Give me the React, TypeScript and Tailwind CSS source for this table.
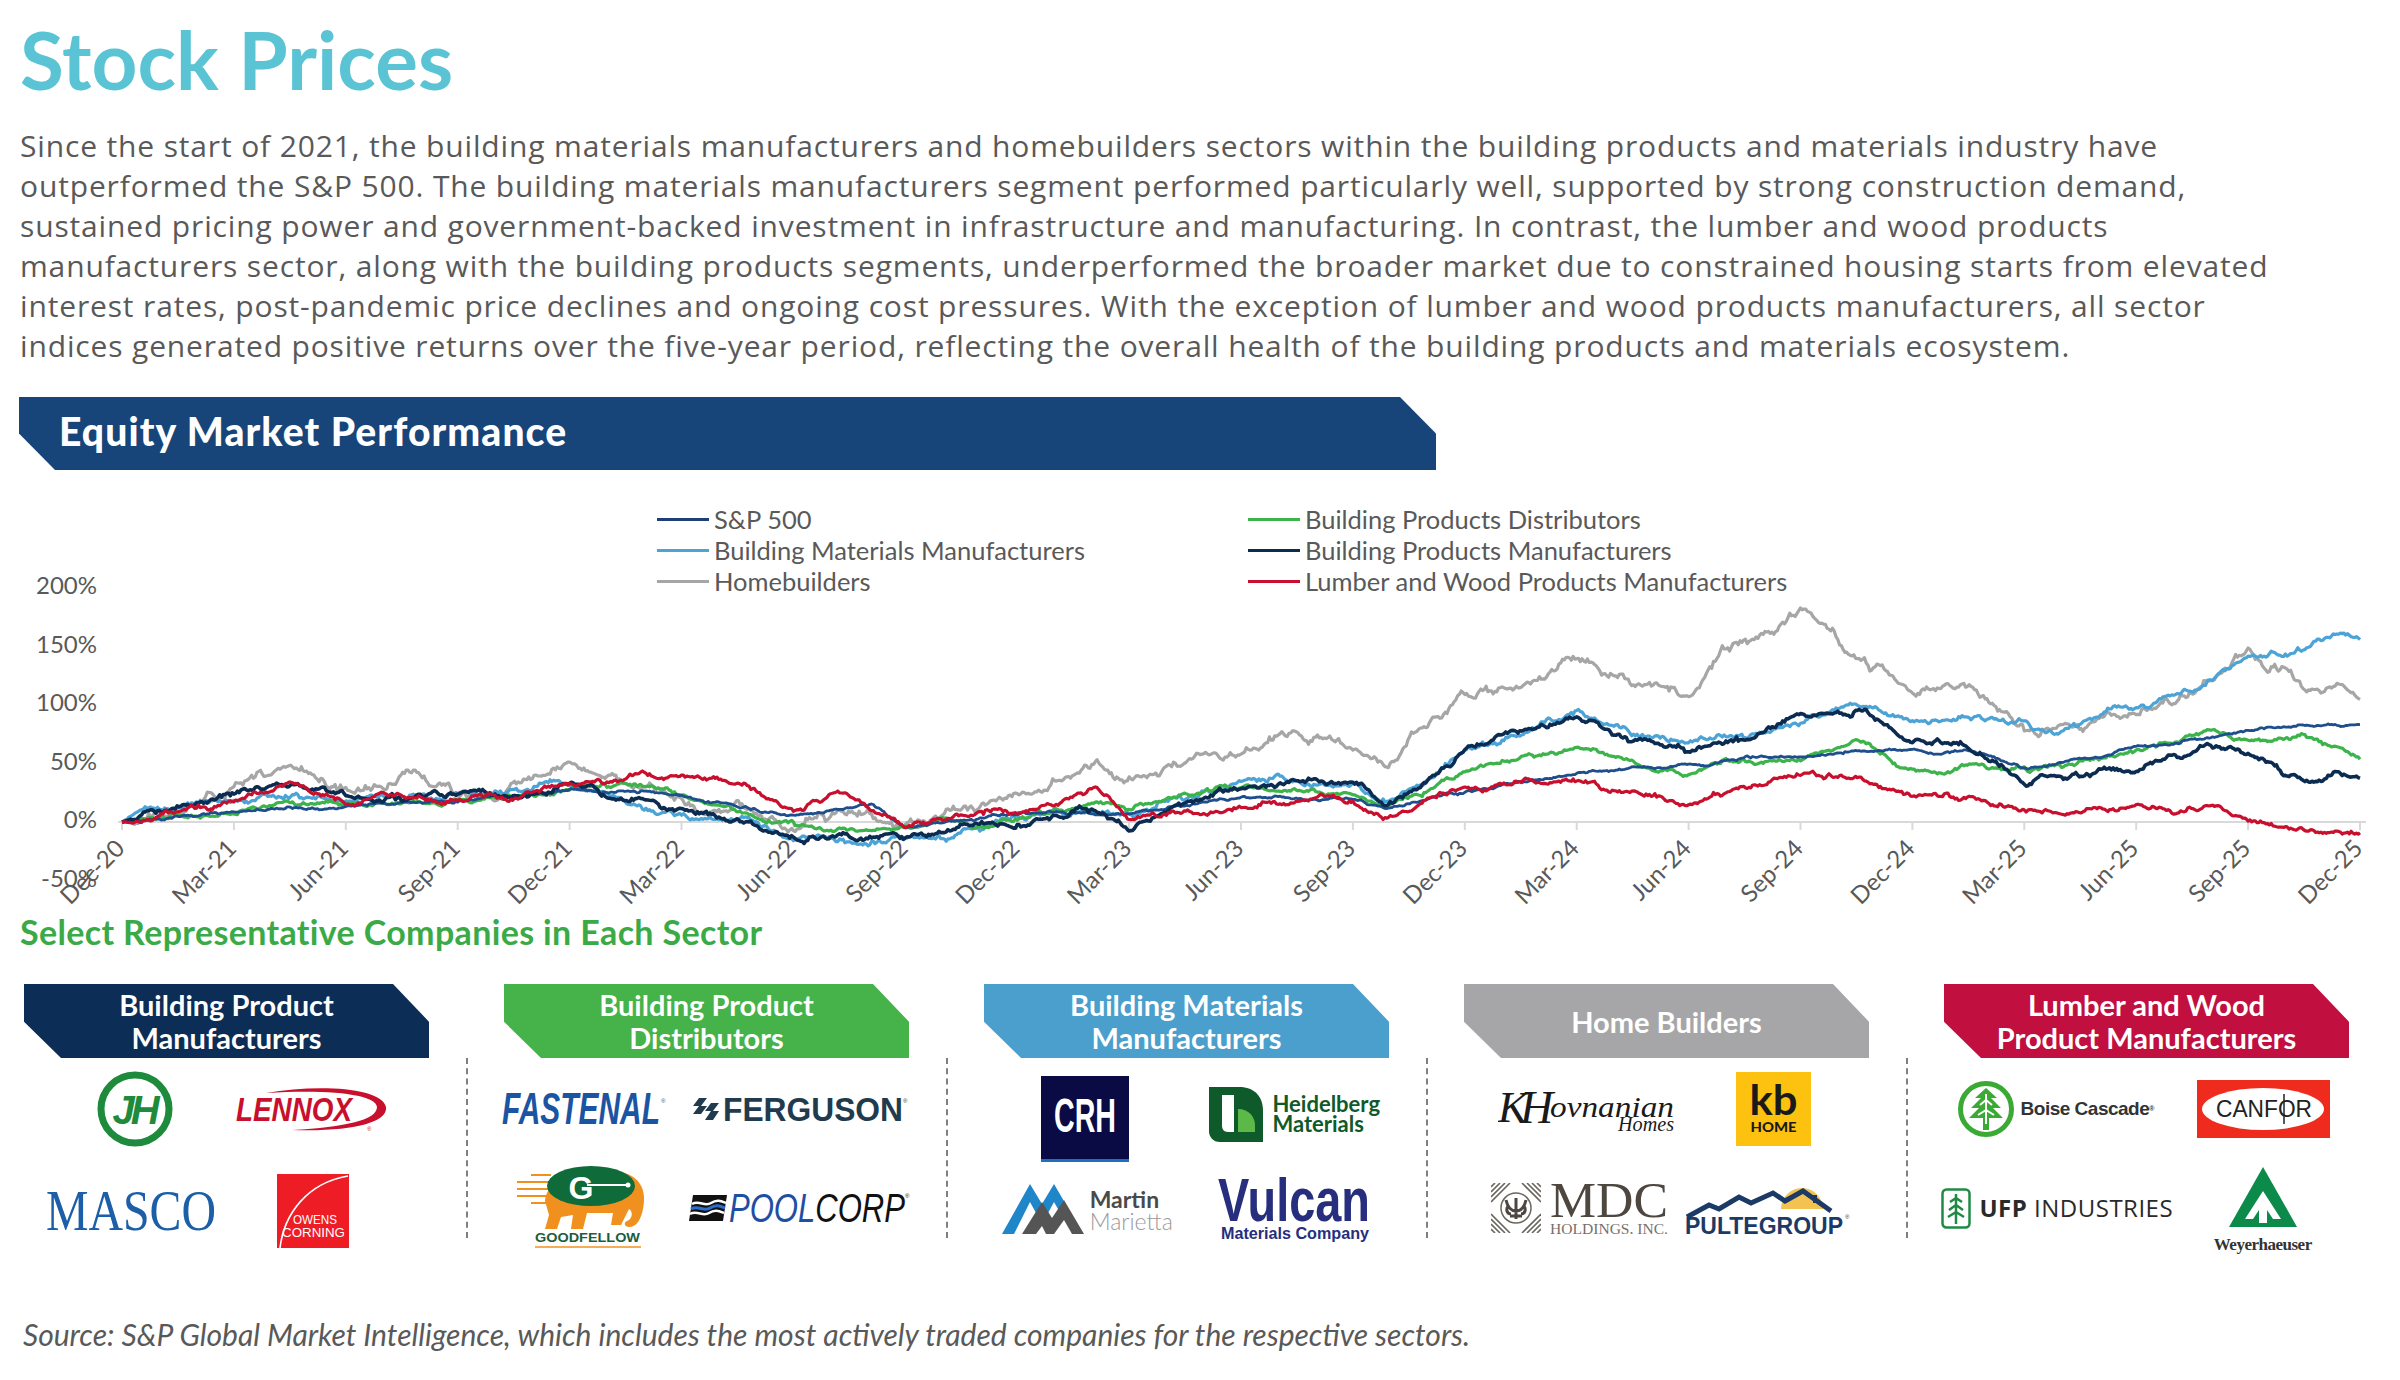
import React from 'react'

// ---------- chart data ----------
type Key = [number, number]

const X0 = 122
const Q = 111.9
const ZERO = 352
const K = 1.17

function mulberry32(a: number) {
  return function () {
    a |= 0
    a = (a + 0x6d2b79f5) | 0
    let t = Math.imul(a ^ (a >>> 15), 1 | a)
    t = (t + Math.imul(t ^ (t >>> 7), 61 | t)) ^ t
    return ((t ^ (t >>> 14)) >>> 0) / 4294967296
  }
}

function interp(keys: Key[], t: number) {
  for (let i = 1; i < keys.length; i++) {
    if (t <= keys[i][0]) {
      const [t0, v0] = keys[i - 1]
      const [t1, v1] = keys[i]
      return v0 + ((v1 - v0) * (t - t0)) / (t1 - t0)
    }
  }
  return keys[keys.length - 1][1]
}

function buildPath(keys: Key[], sigma: number, seed: number) {
  const rnd = mulberry32(seed)
  const gauss = () => {
    const u = rnd() || 1e-9
    const v = rnd()
    return Math.sqrt(-2 * Math.log(u)) * Math.cos(2 * Math.PI * v)
  }
  let n = 0
  const pts: string[] = []
  const N = 1260
  for (let i = 0; i <= N; i++) {
    const t = i / 63
    n = 0.92 * n + sigma * gauss()
    const damp = Math.min(1, i / 12)
    const v = interp(keys, t) + (n + (rnd() - 0.5) * sigma) * damp
    pts.push(`${(X0 + t * Q).toFixed(1)},${(ZERO - v * K).toFixed(1)}`)
  }
  return 'M' + pts.join('L')
}

const SERIES = [
  {
    color: '#a6a6a6', w: 3.2, sigma: 1.5, seed: 11,
    keys: [[0,0],[0.4,8],[1,32],[1.5,46],[2,26],[2.6,38],[3,25],[3.5,32],[4,47],[4.3,35],[5,19],[5.5,12],[6,-9],[6.4,5],[7,-4],[7.5,8],[8,22],[8.7,43],[9,37],[9.5,50],[10,62],[10.5,75],[11,64],[11.3,47],[11.5,70],[12,113],[12.5,118],[13,140],[13.5,118],[14,107],[14.3,150],[14.6,158],[15,179],[15.3,168],[15.6,140],[16,115],[16.5,115],[17,79],[17.5,80],[18,87],[18.5,110],[19,144],[19.5,115],[19.8,120],[20,100]] as Key[],
  },
  {
    color: '#4ba3d6', w: 3.2, sigma: 1.0, seed: 23,
    keys: [[0,0],[0.2,10],[1,18],[1.5,28],[2,20],[3,22],[3.5,25],[4,30],[4.5,20],[5,5],[5.6,0],[6,-15],[7,-15],[7.5,-8],[8,5],[9,10],[9.5,20],[10,30],[11,35],[11.3,18],[11.6,30],[12,58],[13,93],[13.5,78],[14,67],[14.5,72],[15,88],[15.5,100],[16,87],[16.5,85],[17,80],[17.3,72],[18,104],[18.5,112],[19,141],[19.5,146],[19.8,164],[20,158]] as Key[],
  },
  {
    color: '#3cb44b', w: 3.2, sigma: 0.8, seed: 37,
    keys: [[0,0],[1,9],[1.5,16],[2,15],[3,18],[4,30],[4.5,30],[5,25],[6,-4],[7,-4],[8,2],[8.7,18],[9,10],[10,28],[11,25],[11.3,15],[11.6,25],[12,44],[13,64],[13.5,52],[14,42],[14.5,55],[15,53],[15.5,70],[16,44],[17,44],[18,61],[18.7,77],[19,68],[19.5,70],[20,53]] as Key[],
  },
  {
    color: '#1f4e8c', w: 2.8, sigma: 0.45, seed: 41,
    keys: [[0,0],[1,8],[2,15],[3,18],[4,28],[5,22],[6,5],[6.7,13],[7,-4],[8,8],[9,9],[10,22],[11,19],[11.3,12],[12,27],[13,42],[14,50],[15,56],[15.5,60],[16,61],[16.5,62],[17,47],[18,64],[19,78],[20,84]] as Key[],
  },
  {
    color: '#0c2b50', w: 3.6, sigma: 1.0, seed: 53,
    keys: [[0,0],[1,20],[1.5,30],[2,20],[3,22],[3.5,24],[4,35],[4.5,22],[5,13],[6,-12],[7,-12],[7.5,-6],[8,-4],[8.7,10],[9,0],[10,33],[11,36],[11.3,13],[11.6,28],[12,64],[13,90],[13.5,70],[14,59],[14.5,70],[15,90],[15.5,93],[16,70],[16.5,60],[17,36],[18,47],[18.7,67],[19,60],[19.6,27],[19.8,40],[20,37]] as Key[],
  },
  {
    color: '#c8102e', w: 3.2, sigma: 0.9, seed: 67,
    keys: [[0,0],[0.5,5],[1,22],[1.5,40],[2,16],[3,23],[3.5,22],[4,33],[4.5,38],[5,39],[5.5,35],[6,10],[6.4,27],[7,0],[7.5,5],[8,13],[8.7,27],[9,2],[9.5,8],[10,15],[11,16],[11.3,3],[11.6,12],[12,30],[13,38],[13.5,25],[14,15],[14.5,28],[15,42],[15.5,42],[16,25],[16.5,22],[17,8],[18,10],[18.7,14],[19,2],[19.6,-9],[20,-3]] as Key[],
  },
].map(s => ({ ...s, d: buildPath(s.keys, s.sigma, s.seed) }))

const QUARTERS = ['Dec-20','Mar-21','Jun-21','Sep-21','Dec-21','Mar-22','Jun-22','Sep-22','Dec-22','Mar-23','Jun-23','Sep-23','Dec-23','Mar-24','Jun-24','Sep-24','Dec-24','Mar-25','Jun-25','Sep-25','Dec-25']

const LEGEND = [
  [
    { label: 'S&P 500', color: 'bg-[#1c3f78]' },
    { label: 'Building Materials Manufacturers', color: 'bg-[#4ba3d6]' },
    { label: 'Homebuilders', color: 'bg-[#a6a6a6]' },
  ],
  [
    { label: 'Building Products Distributors', color: 'bg-[#3cb44b]' },
    { label: 'Building Products Manufacturers', color: 'bg-[#0c2b50]' },
    { label: 'Lumber and Wood Products Manufacturers', color: 'bg-[#c8102e]' },
  ],
]

const PARAGRAPH = [
  'Since the start of 2021, the building materials manufacturers and homebuilders sectors within the building products and materials industry have',
  'outperformed the S&P 500. The building materials manufacturers segment performed particularly well, supported by strong construction demand,',
  'sustained pricing power and government-backed investment in infrastructure and manufacturing. In contrast, the lumber and wood products',
  'manufacturers sector, along with the building products segments, underperformed the broader market due to constrained housing starts from elevated',
  'interest rates, post-pandemic price declines and ongoing cost pressures. With the exception of lumber and wood products manufacturers, all sector',
  'indices generated positive returns over the five-year period, reflecting the overall health of the building products and materials ecosystem.',
]

function PerformanceChart() {
  const yTicks = [200, 150, 100, 50, 0, -50]
  return (
    <div className="relative h-[445px]">
      <svg width="2400" height="445" viewBox="0 0 2400 445" className="block">
        {yTicks.map(v => (
          <text key={v} x="97" y={ZERO - v * K} textAnchor="end" dominantBaseline="middle" fontFamily="Lato, sans-serif" fontSize="24" fill="#595959">
            {v}%
          </text>
        ))}
        <line x1="118" y1={ZERO} x2="2366" y2={ZERO} stroke="#d9d9d9" strokeWidth="2" />
        {QUARTERS.map((q, i) => (
          <line key={q} x1={X0 + i * Q} y1={ZERO} x2={X0 + i * Q} y2={ZERO + 8} stroke="#d9d9d9" strokeWidth="2" />
        ))}
        {SERIES.map((s, i) => (
          <path key={i} d={s.d} fill="none" stroke={s.color} strokeWidth={s.w} strokeLinejoin="round" />
        ))}
        {QUARTERS.map((q, i) => {
          const x = X0 + i * Q + 4
          return (
            <text key={q} x={x} y="380" transform={`rotate(-45 ${x} 380)`} textAnchor="end" fontFamily="Lato, sans-serif" fontSize="24" fill="#595959">
              {q}
            </text>
          )
        })}
      </svg>

      {/* legend sits over the empty top of the plot */}
      <div className="absolute left-[657px] top-[34px] flex font-['Lato',sans-serif] text-[25.5px] leading-[31px] text-[#595959]">
        {LEGEND.map((col, ci) => (
          <div key={ci} className={ci === 0 ? 'w-[591px]' : ''}>
            {col.map(item => (
              <div key={item.label} className="flex items-center gap-[5px] whitespace-nowrap">
                <span className={`w-[52px] h-[3px] ${item.color}`} />
                <span>{item.label}</span>
              </div>
            ))}
          </div>
        ))}
      </div>
    </div>
  )
}

// ---------- logos ----------
const SANS = 'Liberation Sans, Arial, sans-serif'
const SERIF = 'Liberation Serif, Times New Roman, serif'

function JamesHardie() {
  return (
    <svg width="78" height="78" viewBox="0 0 78 78">
      <circle cx="39" cy="39" r="34" fill="none" stroke="#1d8a3c" strokeWidth="7" />
      <text x="38" y="54" textAnchor="middle" fontFamily={SANS} fontWeight="900" fontStyle="italic" fontSize="40" fill="#1d8a3c" letterSpacing="-4">JH</text>
    </svg>
  )
}

function Lennox() {
  return (
    <svg width="152" height="48" viewBox="0 0 152 48">
      <path d="M30 8 C 80 -1, 146 2, 150 22 C 152 37, 118 47, 56 45 C 110 42, 141 35, 141 22 C 140 10, 98 4, 30 8 Z" fill="#c8102e" />
      <text x="0" y="36" fontFamily={SANS} fontWeight="700" fontStyle="italic" fontSize="34" fill="#c8102e" textLength="116" lengthAdjust="spacingAndGlyphs">LENNOX</text>
      <text x="131" y="46" fontFamily={SANS} fontSize="6" fill="#c8102e">®</text>
    </svg>
  )
}

function Masco() {
  return (
    <svg width="172" height="44" viewBox="0 0 172 44">
      <text x="0" y="41" fontFamily={SERIF} fontSize="57" fill="#1c5fa8" textLength="170" lengthAdjust="spacingAndGlyphs">MASCO</text>
    </svg>
  )
}

function OwensCorning() {
  return (
    <svg width="72" height="74" viewBox="0 0 72 74">
      <rect width="72" height="74" fill="#ee1c25" />
      <path d="M3 74 C 7 40, 30 9, 71 2" fill="none" stroke="#fff" strokeWidth="1.6" />
      <text x="16" y="50" fontFamily={SANS} fontSize="13" fill="#fff" textLength="44" lengthAdjust="spacingAndGlyphs">OWENS</text>
      <text x="5" y="63" fontFamily={SANS} fontSize="13" fill="#fff" textLength="63" lengthAdjust="spacingAndGlyphs">CORNING</text>
    </svg>
  )
}

function Fastenal() {
  return (
    <svg width="166" height="36" viewBox="0 0 166 36">
      <text x="0" y="33" fontFamily={SANS} fontWeight="900" fontStyle="italic" fontSize="44" fill="#1a54a3" textLength="158" lengthAdjust="spacingAndGlyphs">FASTENAL</text>
      <text x="159" y="12" fontFamily={SANS} fontSize="6" fill="#1a54a3">®</text>
    </svg>
  )
}

function Ferguson() {
  return (
    <svg width="216" height="28" viewBox="0 0 216 28">
      <path d="M6 3 H14 L8 11 L14 11 L8 19 H0 L6 11 H0 Z" fill="#1f3b4d" />
      <path d="M18 8 H26 L20 16 L26 16 L20 25 H12 L18 16 H12 Z" fill="#1f3b4d" />
      <text x="30" y="26" fontFamily={SANS} fontWeight="900" fontSize="33" fill="#1f3b4d" textLength="180" lengthAdjust="spacingAndGlyphs">FERGUSON</text>
      <text x="210" y="8" fontFamily={SANS} fontSize="6" fill="#1f3b4d">®</text>
    </svg>
  )
}

function Goodfellow() {
  return (
    <svg width="132" height="86" viewBox="0 0 132 86">
      {[10, 17, 24, 31, 38].map(y => (
        <line key={y} x1={y === 10 || y === 38 ? 14 : 0} y1={y} x2="34" y2={y} stroke="#f0901e" strokeWidth="2" />
      ))}
      <path d="M28 36 C 30 10, 70 2, 100 6 C 124 10, 130 26, 126 44 C 124 54, 120 62, 112 62 C 108 62, 106 58, 110 56 C 116 54, 116 46, 112 44 L 104 60 L 94 60 L 96 48 L 70 48 L 66 64 L 54 64 L 56 50 L 44 52 L 40 64 L 28 64 L 32 50 Z" fill="#f0901e" />
      <ellipse cx="74" cy="21" rx="44" ry="20" fill="#0f6b3a" />
      <text x="64" y="34" textAnchor="middle" fontFamily={SANS} fontWeight="900" fontSize="32" fill="#fff">G</text>
      <line x1="70" y1="20" x2="110" y2="20" stroke="#fff" strokeWidth="2" />
      <circle cx="111" cy="20" r="2.5" fill="#fff" />
      <text x="18" y="77" fontFamily={SANS} fontWeight="900" fontSize="13" fill="#1b5e3b" textLength="105" lengthAdjust="spacingAndGlyphs">GOODFELLOW</text>
      <line x1="18" y1="82" x2="124" y2="82" stroke="#f0901e" strokeWidth="1.5" />
    </svg>
  )
}

function PoolCorp() {
  return (
    <svg width="222" height="34" viewBox="0 0 222 34">
      <path d="M4 4 H38 L34 30 H0 Z" fill="#111" />
      <path d="M3 13 C 10 9, 16 16, 22 12 S 32 10, 37 12" fill="none" stroke="#fff" strokeWidth="2.5" />
      <path d="M2 18 C 9 14, 15 21, 21 17 S 31 15, 36 17" fill="none" stroke="#2a6fd0" strokeWidth="3" />
      <path d="M1 23 C 8 19, 14 26, 20 22 S 30 20, 35 22" fill="none" stroke="#fff" strokeWidth="2.5" />
      <text x="40" y="31" fontFamily={SANS} fontStyle="italic" fontSize="40" textLength="176" lengthAdjust="spacingAndGlyphs">
        <tspan fill="#1f4ea3">POOL</tspan>
        <tspan fill="#111">CORP</tspan>
      </text>
      <text x="216" y="7" fontFamily={SANS} fontSize="6" fill="#111">®</text>
    </svg>
  )
}

function Crh() {
  return (
    <svg width="88" height="86" viewBox="0 0 88 86">
      <rect width="88" height="83" fill="#0a0a45" />
      <rect y="83" width="88" height="3" fill="#1e6fbf" />
      <text x="44" y="56" textAnchor="middle" fontFamily={SANS} fontWeight="900" fontSize="48" fill="#fff" textLength="62" lengthAdjust="spacingAndGlyphs">CRH</text>
    </svg>
  )
}

function Heidelberg() {
  return (
    <div className="flex items-center gap-[9px]">
      <svg width="54" height="55" viewBox="0 0 54 55">
        <path d="M0 0 H30 C 46 0, 54 10, 54 24 V55 H11 C 4 55, 0 50, 0 44 Z" fill="#0f5a2a" />
        <path d="M13 8 H25 V45 H19 C 15 45, 13 42, 13 39 Z" fill="#fff" />
        <path d="M29 45 V22 C 40 22, 46 30, 46 38 V45 Z" fill="#5cb947" />
      </svg>
      <div className="font-['Lato',sans-serif] font-bold text-[22px] leading-[20px] text-[#0f5a2a] whitespace-nowrap">
        <div>Heidelberg</div>
        <div>Materials</div>
      </div>
    </div>
  )
}

function MartinMarietta() {
  return (
    <div className="flex items-end gap-[6px]">
      <svg width="82" height="52" viewBox="0 0 82 52">
        <polygon points="0,52 28,2 40,22 52,2 66,26 60,34 52,20 40,42 28,20 12,52" fill="#1f86c9" />
        <polygon points="20,52 40,20 50,36 62,18 82,52 70,52 62,38 52,52 44,52 40,44 34,52" fill="#555" />
      </svg>
      <div className="font-['Lato',sans-serif] text-[23px] leading-[22px] mb-[2px] whitespace-nowrap">
        <div className="font-bold text-[#4a4a4a]">Martin</div>
        <div className="font-light text-[#9a9a9a]">Marietta</div>
      </div>
    </div>
  )
}

function Vulcan() {
  return (
    <svg width="154" height="68" viewBox="0 0 154 68">
      <text x="0" y="47" fontFamily={SANS} fontWeight="900" fontSize="62" fill="#262e7d" textLength="152" lengthAdjust="spacingAndGlyphs">Vulcan</text>
      <text x="3" y="65" fontFamily={SANS} fontWeight="700" fontSize="16" fill="#262e7d" textLength="148" lengthAdjust="spacingAndGlyphs">Materials Company</text>
    </svg>
  )
}

function Hovnanian() {
  return (
    <svg width="182" height="48" viewBox="0 0 182 48">
      <text x="0" y="37" fontFamily={SERIF} fontStyle="italic" fontSize="44" fill="#1a1a1a">K</text>
      <text x="22" y="38" fontFamily={SERIF} fontStyle="italic" fontSize="46" fill="#1a1a1a">H</text>
      <text x="52" y="32" fontFamily={SERIF} fontStyle="italic" fontSize="30" fill="#1a1a1a" textLength="124" lengthAdjust="spacingAndGlyphs">ovnanian</text>
      <text x="120" y="46" fontFamily={SERIF} fontStyle="italic" fontSize="20" fill="#1a1a1a" textLength="56" lengthAdjust="spacingAndGlyphs">Homes</text>
    </svg>
  )
}

function KbHome() {
  return (
    <svg width="75" height="74" viewBox="0 0 75 74">
      <rect width="75" height="74" fill="#fdc20f" />
      <text x="37.5" y="43" textAnchor="middle" fontFamily="Lato, sans-serif" fontWeight="700" fontSize="42" fill="#1a1a1a" textLength="48" lengthAdjust="spacingAndGlyphs">kb</text>
      <text x="37.5" y="60" textAnchor="middle" fontFamily="Lato, sans-serif" fontWeight="900" fontSize="14" fill="#1a1a1a" textLength="46" lengthAdjust="spacingAndGlyphs">HOME</text>
    </svg>
  )
}

function Mdc() {
  return (
    <div className="flex items-center gap-[9px]">
      <svg width="50" height="50" viewBox="0 0 50 50">
        <g stroke="#6b655f" strokeWidth="1.6">
          {[4, 9, 14, 19].map(o => (
            <g key={o}>
              <line x1={o} y1="0" x2="0" y2={o} />
              <line x1={50 - o} y1="0" x2="50" y2={o} />
              <line x1="0" y1={50 - o} x2={o} y2="50" />
              <line x1="50" y1={50 - o} x2={50 - o} y2="50" />
            </g>
          ))}
        </g>
        <circle cx="25" cy="25" r="15" fill="#fff" stroke="#6b655f" strokeWidth="1.5" />
        <path d="M15 17 C 17 26, 21 28, 25 28 C 29 28, 33 26, 35 17 M25 15 V36 M19 33 H31 M18 22 C 14 26, 16 31, 20 31 M32 22 C 36 26, 34 31, 30 31" fill="none" stroke="#4e4740" strokeWidth="3" />
      </svg>
      <svg width="120" height="52" viewBox="0 0 120 52">
        <text x="0" y="35" fontFamily={SERIF} fontSize="50" fill="#4e4740" textLength="118" lengthAdjust="spacingAndGlyphs">MDC</text>
        <text x="0" y="52" fontFamily={SERIF} fontSize="14" fill="#77706a" textLength="118" lengthAdjust="spacingAndGlyphs">HOLDINGS, INC.</text>
      </svg>
    </div>
  )
}

function Pulte() {
  return (
    <svg width="166" height="54" viewBox="0 0 166 54">
      <path d="M96 28 A 21 21 0 0 1 138 28 Z" fill="#f3c251" />
      <polyline points="2,36 24,24 34,28 54,16 66,22 88,12 100,20 118,10 146,30" fill="none" stroke="#1c3a66" strokeWidth="5" strokeLinejoin="miter" />
      <rect x="128" y="14" width="4" height="8" fill="#1c3a66" />
      <text x="0" y="53" fontFamily={SANS} fontWeight="900" fontSize="23" fill="#1c3a66" textLength="158" lengthAdjust="spacingAndGlyphs">PULTEGROUP</text>
      <text x="160" y="38" fontFamily={SANS} fontSize="6" fill="#1c3a66">®</text>
    </svg>
  )
}

function BoiseCascade() {
  return (
    <div className="flex items-center gap-[6px]">
      <svg width="58" height="58" viewBox="0 0 58 58">
        <circle cx="29" cy="29" r="25.5" fill="none" stroke="#3aaa35" strokeWidth="5" />
        <path d="M29 8 L40 18 H34 L44 28 H36 L46 38 H32 V50 H26 V38 H12 L22 28 H14 L24 18 H18 Z" fill="#3aaa35" />
        <path d="M29 14 V44 M29 20 L23 25 M29 20 L35 25 M29 30 L21 35 M29 30 L37 35" stroke="#fff" strokeWidth="2" fill="none" />
      </svg>
      <span className="font-['Liberation_Sans',sans-serif] font-bold text-[19px] tracking-[-0.5px] text-[#333] whitespace-nowrap">
        Boise Cascade<sup className="text-[7px]">®</sup>
      </span>
    </div>
  )
}

function Canfor() {
  return (
    <svg width="133" height="58" viewBox="0 0 133 58">
      <rect width="133" height="58" fill="#ef2b1e" />
      <ellipse cx="66" cy="29" rx="61" ry="21" fill="#fff" />
      <text x="19" y="37" fontFamily={SANS} fontWeight="400" fontSize="24" fill="#222" textLength="96" lengthAdjust="spacingAndGlyphs">CANFOR</text>
      <line x1="87" y1="14" x2="87" y2="44" stroke="#222" strokeWidth="1.5" />
    </svg>
  )
}

function Ufp() {
  return (
    <div className="flex items-center gap-[8px]">
      <svg width="30" height="41" viewBox="0 0 30 41">
        <rect x="1.5" y="1.5" width="27" height="38" rx="4" fill="none" stroke="#1f8a45" strokeWidth="2.5" />
        <path d="M15 6 V36 M15 10 L9 14 M15 10 L21 14 M15 17 L8 22 M15 17 L22 22 M15 24 L7 29 M15 24 L23 29" stroke="#1f8a45" strokeWidth="2.5" fill="none" />
      </svg>
      <span className="font-['Open_Sans',sans-serif] text-[24px] leading-none tracking-[0.5px] text-[#2a2a2a] whitespace-nowrap">
        <span className="font-bold">UFP</span> INDUSTRIES
      </span>
    </div>
  )
}

function Weyerhaeuser() {
  return (
    <div className="flex flex-col items-center gap-[9px]">
      <svg width="68" height="60" viewBox="0 0 68 60">
        <polygon points="34,0 68,60 0,60" fill="#0b8a4a" />
        <polygon points="34,24 52,52 44,52 38,43 38,56 30,56 30,43 24,52 16,52" fill="#fff" />
      </svg>
      <span className="font-['Liberation_Serif',serif] font-bold text-[17px] leading-none tracking-[-0.5px] text-[#333]">Weyerhaeuser</span>
    </div>
  )
}

// ---------- sector columns ----------
type Cell = { el: React.ReactNode; cls?: string }

const SECTORS: { title: string[]; bg: string; cells: Cell[] }[] = [
  {
    title: ['Building Product', 'Manufacturers'],
    bg: 'bg-[#0c2d56]',
    cells: [
      { el: <JamesHardie />, cls: 'ml-[20px]' },
      { el: <Lennox />, cls: 'mr-[32px]' },
      { el: <Masco />, cls: 'ml-[14px] mt-[6px]' },
      { el: <OwensCorning />, cls: 'mr-[30px] mt-[6px]' },
    ],
  },
  {
    title: ['Building Product', 'Distributors'],
    bg: 'bg-[#45b24a]',
    cells: [
      { el: <Fastenal />, cls: 'mr-[40px]' },
      { el: <Ferguson />, cls: 'mr-[14px]' },
      { el: <Goodfellow />, cls: 'mr-[44px]' },
      { el: <PoolCorp />, cls: 'mr-[16px]' },
    ],
  },
  {
    title: ['Building Materials', 'Manufacturers'],
    bg: 'bg-[#4b9fcc]',
    cells: [
      { el: <Crh />, cls: 'mt-[20px]' },
      { el: <Heidelberg />, cls: 'ml-[14px] mt-[10px]' },
      { el: <MartinMarietta />, cls: 'ml-[4px]' },
      { el: <Vulcan />, cls: 'ml-[14px]' },
    ],
  },
  {
    title: ['Home Builders'],
    bg: 'bg-[#a6a6a8]',
    cells: [
      { el: <Hovnanian />, cls: 'ml-[48px]' },
      { el: <KbHome />, cls: 'ml-[12px]' },
      { el: <Mdc />, cls: 'ml-[30px]' },
      { el: <Pulte /> },
    ],
  },
  {
    title: ['Lumber and Wood', 'Product Manufacturers'],
    bg: 'bg-[#c10f3f]',
    cells: [
      { el: <BoiseCascade />, cls: 'ml-[20px]' },
      { el: <Canfor />, cls: 'ml-[32px]' },
      { el: <Ufp />, cls: 'ml-[24px]' },
      { el: <Weyerhaeuser />, cls: 'ml-[30px] mt-[4px]' },
    ],
  },
]

function SectorColumn({ title, bg, cells }: { title: string[]; bg: string; cells: Cell[] }) {
  return (
    <div className="w-[405px] flex flex-col">
      <div
        className={`h-[74px] ${bg} flex flex-col items-center justify-center text-white font-['Lato',sans-serif] font-bold text-[29px] leading-[33px] whitespace-nowrap [clip-path:polygon(0_0,calc(100%_-_36px)_0,100%_51%,100%_100%,37px_100%,0_51%)]`}
      >
        {title.map(t => (
          <div key={t}>{t}</div>
        ))}
      </div>
      <div className="grid grid-cols-2 grid-rows-[102px_96px]">
        {cells.map((c, i) => (
          <div key={i} className="flex items-center justify-center">
            <div className={c.cls}>{c.el}</div>
          </div>
        ))}
      </div>
    </div>
  )
}

function Separator() {
  return (
    <div className="w-[75px] flex justify-center pt-[74px]">
      <div className="h-[180px] border-l-2 border-dashed border-[#7f7f7f]" />
    </div>
  )
}

export default function App() {
  return (
    <div className="w-[2400px] h-[1380px] bg-white overflow-hidden pt-[20px]">
      <h1 className="ml-[20px] h-[78px] font-['Lato',sans-serif] font-bold text-[80px] leading-[78px] text-[#5bc4d4]">
        Stock Prices
      </h1>

      <div className="mt-[28px] ml-[20px] font-['Open_Sans',sans-serif] text-[30px] leading-[40px] tracking-[0.85px] text-[#595959]">
        {PARAGRAPH.map(line => (
          <div key={line} className="whitespace-nowrap">{line}</div>
        ))}
      </div>

      <div className="mt-[31px] ml-[19px] w-[1417px] h-[73px] bg-[#17457a] flex items-center pl-[40px] pb-[4px] [clip-path:polygon(0_0,calc(100%_-_36px)_0,100%_50%,100%_100%,36px_100%,0_50%)]">
        <span className="font-['Lato',sans-serif] font-black text-[39px] tracking-[1.1px] text-white">Equity Market Performance</span>
      </div>

      <PerformanceChart />

      <h2 className="ml-[20px] font-['Lato',sans-serif] font-bold text-[34px] leading-[34px] tracking-[0.35px] text-[#3aaa47]">
        Select Representative Companies in Each Sector
      </h2>

      <div className="mt-[35px] ml-[24px] flex">
        {SECTORS.map((s, i) => (
          <React.Fragment key={s.title.join(' ')}>
            {i > 0 && <Separator />}
            <SectorColumn {...s} />
          </React.Fragment>
        ))}
      </div>

      <p className="mt-[63px] ml-[23px] font-['Lato',sans-serif] italic text-[30px] leading-[30px] text-[#595959]">
        Source: S&amp;P Global Market Intelligence, which includes the most actively traded companies for the respective sectors.
      </p>
    </div>
  )
}
